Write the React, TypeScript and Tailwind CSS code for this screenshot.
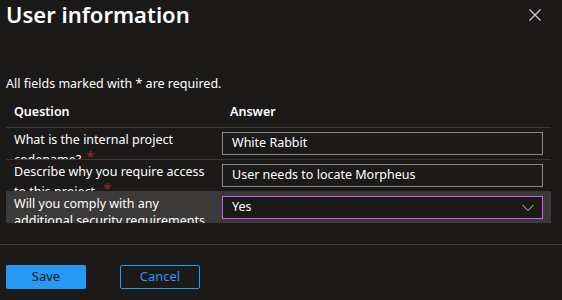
import React from "react";

const rows = [
  { q: "What is the internal project codename?", a: "White Rabbit", kind: "text" },
  { q: "Describe why you require access to this project.", a: "User needs to locate Morpheus", kind: "text" },
  { q: "Will you comply with any additional security requirements", a: "Yes", kind: "select" },
];

const App: React.FC = () => {
  return (
    <div
      className="w-[562px] h-[300px] bg-[#1b1a19] text-white overflow-hidden"
      style={{ fontFamily: '"Noto Sans", "Open Sans", sans-serif' }}
    >
      <div className="flex items-start justify-between h-[60px]">
        <h1 className="ml-[6px] mt-[-2px] text-[22px] leading-[32px] font-semibold">User information</h1>
        <button className="mr-[20px] mt-[8px] text-[#d2d0ce]">
          <svg width="14" height="14" viewBox="0 0 14 14" fill="none" stroke="currentColor" strokeWidth="1.2">
            <path d="M1.5 1.5l11 11M12.5 1.5l-11 11" />
          </svg>
        </button>
      </div>

      <p className="ml-[6px] mt-[14px] text-[12.5px] leading-[20px]">All fields marked with * are required.</p>

      <div className="ml-[6px] w-[545px] mt-[3px]">
        <div className="flex h-[30px] items-center text-[12.5px] font-semibold">
          <div className="w-[216px] pl-[8px]">Question</div>
          <div className="pl-[8px]">Answer</div>
        </div>
        {rows.map((r, i) => (
          <div
            key={i}
            className={`flex h-[32px] border-t ${r.kind === "select" ? "bg-[#3b3a39] border-[#3b3a39]" : "border-[#3b3a39]"}`}
          >
            <div
              className={`w-[216px] pl-[8px] pr-[8px] overflow-hidden text-[12.5px] ${r.kind === "select" ? "pt-[3px] leading-[17px]" : "pt-[2px] leading-[19px]"}`}
            >
              {r.q}
              {r.kind === "text" && (
                <span className="relative top-[-2px] ml-[5px] text-[15px] text-[#a4262c]">*</span>
              )}
            </div>
            {r.kind === "select" ? (
              <div className="mt-[4px] w-[321px] h-[23px] border border-[#c660f0] bg-[#1b1a19] flex items-center justify-between pl-[9px] pr-[8px] text-[12.5px]">
                <span>Yes</span>
                <svg width="12" height="8" viewBox="0 0 12 8" fill="none" stroke="#d2d0ce" strokeWidth="1">
                  <path d="M0.5 1l5.5 5.5L11.5 1" />
                </svg>
              </div>
            ) : (
              <div className="mt-[4px] w-[321px] h-[23px] border border-[#8a8886] bg-[#1b1a19] flex items-center pl-[9px] text-[12.5px]">
                {r.a}
              </div>
            )}
          </div>
        ))}
      </div>

      <div className="mt-[21px] border-t border-[#3b3a39]" />

      <div className="flex gap-[34px] ml-[6px] mt-[20px]">
        <button className="w-[80px] h-[24px] rounded-[2px] bg-[#2899f5] text-[#1b1a19] text-[13px]">Save</button>
        <button className="w-[80px] h-[24px] rounded-[2px] border border-[#2899f5] text-[#2899f5] text-[13px]">Cancel</button>
      </div>
    </div>
  );
};

export default App;
